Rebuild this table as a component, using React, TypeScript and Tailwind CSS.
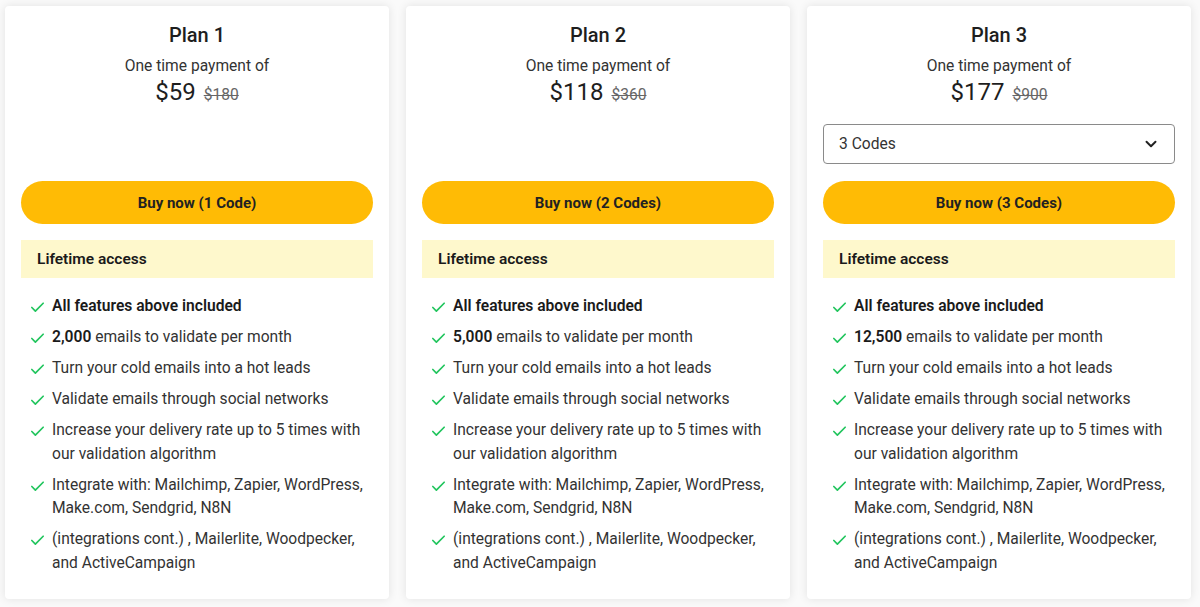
import React from 'react';
import { Check, ChevronDown } from 'lucide-react';

type Plan = {
  name: string;
  price: string;
  oldPrice: string;
  codes: number;
  emails: string;
  select?: boolean;
};

const plans: Plan[] = [
  { name: 'Plan 1', price: '$59', oldPrice: '$180', codes: 1, emails: '2,000' },
  { name: 'Plan 2', price: '$118', oldPrice: '$360', codes: 2, emails: '5,000' },
  { name: 'Plan 3', price: '$177', oldPrice: '$900', codes: 3, emails: '12,500', select: true },
];

function Feature({ children }: { children: React.ReactNode }) {
  return (
    <li className="flex items-start gap-[6px]">
      <Check size={17} strokeWidth={2.4} className="mt-[4px] shrink-0 text-[#22c55e]" />
      <span>{children}</span>
    </li>
  );
}

function PlanCard({ plan }: { plan: Plan }) {
  return (
    <div className="flex flex-col rounded-[4px] bg-white px-4 pt-[15px] pb-6 shadow-[0_0_10px_rgba(0,0,0,0.10)]">
      <div className="text-center text-[20px] leading-[28px] font-medium text-[#1e1e1e]">{plan.name}</div>
      <div className="mt-[6px] text-center text-[15.6px] leading-[22px] text-[#333]">One time payment of</div>
      <div className="flex items-baseline justify-center gap-2">
        <span className="text-[24px] leading-[30px] text-[#1e1e1e]">{plan.price}</span>
        <span className="text-[15.6px] text-[#666] line-through">{plan.oldPrice}</span>
      </div>

      {plan.select ? (
        <div className="mt-[17px] flex h-[40px] items-center justify-between rounded-[4px] border border-[#8a8a8a] pr-[14px] pl-[15px] text-[15.6px] text-[#333]">
          <span>{plan.codes} Codes</span>
          <ChevronDown size={18} strokeWidth={2.6} className="text-[#222]" />
        </div>
      ) : (
        <div className="mt-[17px] h-[40px]" />
      )}

      <button className="mt-[17px] h-[43px] w-full rounded-full bg-[#ffbb05] text-[15px] font-bold text-[#222]">
        Buy now ({plan.codes} {plan.codes === 1 ? 'Code' : 'Codes'})
      </button>

      <div className="mt-4 flex h-[38px] items-center bg-[#fef8cc] px-4 text-[15.5px] font-semibold text-[#1a1a1a]">
        Lifetime access
      </div>

      <ul className="mt-[17px] flex flex-col gap-[7.5px] pl-[8px] text-[15.6px] leading-[23.5px] text-[#333]">
        <Feature>
          <span className="font-semibold text-[#1a1a1a]">All features above included</span>
        </Feature>
        <Feature>
          <span className="font-semibold text-[#1a1a1a]">{plan.emails}</span> emails to validate per month
        </Feature>
        <Feature>Turn your cold emails into a hot leads</Feature>
        <Feature>Validate emails through social networks</Feature>
        <Feature>Increase your delivery rate up to 5 times with our validation algorithm</Feature>
        <Feature>Integrate with: Mailchimp, Zapier, WordPress, Make.com, Sendgrid, N8N</Feature>
        <Feature>(integrations cont.) , Mailerlite, Woodpecker, and ActiveCampaign</Feature>
      </ul>
    </div>
  );
}

export default function App() {
  return (
    <div className="min-h-[607px] bg-[#fafafa] pt-[6px] pr-[9px] pl-[5px] font-['Roboto',sans-serif]">
      <div className="grid grid-cols-3 gap-[17px]">
        {plans.map((p) => (
          <PlanCard key={p.name} plan={p} />
        ))}
      </div>
    </div>
  );
}
